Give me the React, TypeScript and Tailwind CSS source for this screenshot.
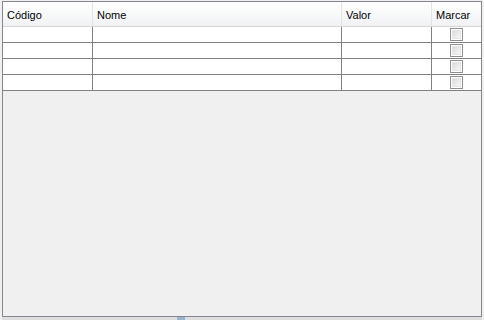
import React from 'react';

const columns = ['Código', 'Nome', 'Valor', 'Marcar'];
const rows = [1, 2, 3, 4];

function CheckBox() {
  return (
    <div className="w-[13px] h-[13px] border border-[#8f8f8f] bg-white p-[1px]">
      <div className="w-full h-full bg-gradient-to-br from-[#dcdcdc] to-[#f6f6f6] border border-[#e4e4e4]" />
    </div>
  );
}

export default function App() {
  return (
    <div
      className="w-[484px] h-[320px] bg-[#f0f0f0] pl-[2px] pt-[1px] text-[11px] text-black"
      style={{ fontFamily: '"Liberation Sans", Arial, sans-serif' }}
    >
      <div className="w-[480px] h-[316px] border border-[#828790] bg-[#f0f0f0] flex flex-col">
        {/* header */}
        <div className="grid grid-cols-[90px_249px_90px_49px] h-[25px] bg-gradient-to-b from-white to-[#f1f2f4] border-b border-[#d5d5d5]">
          {columns.map((c, i) => (
            <div
              key={c}
              className={`flex items-center pl-[4px] pt-[2px] ${i < 3 ? 'border-r border-[#e3e3e3]' : ''}`}
            >
              {c}
            </div>
          ))}
        </div>
        {/* rows */}
        {rows.map((r) => (
          <div key={r} className="grid grid-cols-[90px_249px_90px_49px] h-[16px] bg-white border-b border-[#808080]">
            <div className="border-r border-[#808080]" />
            <div className="border-r border-[#808080]" />
            <div className="border-r border-[#808080]" />
            <div className="flex items-center justify-center">
              <CheckBox />
            </div>
          </div>
        ))}
      </div>
      <div className="h-[3px] w-[480px] bg-[#dedede] flex">
        <div className="ml-[175px] w-[8px] h-full bg-[#9ab4cf]" />
      </div>
    </div>
  );
}
